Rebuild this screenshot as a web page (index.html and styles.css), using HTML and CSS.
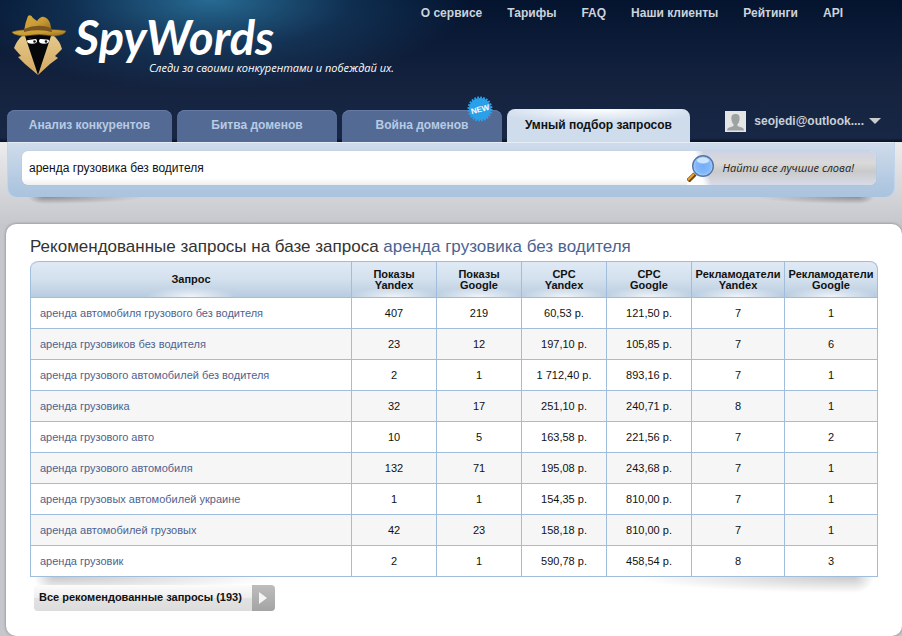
FILE: index.html
```html
<!DOCTYPE html>
<html lang="ru">
<head>
<meta charset="utf-8">
<title>SpyWords</title>
<link rel="stylesheet" href="styles.css">
</head>
<body>
<header class="header">
  <div class="topbar">
    <a class="logo" href="#">
      <svg class="spy" viewBox="0 0 54 60" aria-hidden="true">
        <defs>
          <linearGradient id="hat" x1="0" y1="0" x2="1" y2="1"><stop offset="0" stop-color="#d7ab3c"/><stop offset=".5" stop-color="#c99b35"/><stop offset="1" stop-color="#94691d"/></linearGradient>
          <linearGradient id="coat" x1="0" y1="0" x2="0" y2="1"><stop offset="0" stop-color="#e6c98b"/><stop offset="1" stop-color="#d3a861"/></linearGradient>
        </defs>
        <path d="M13 19H42L38 40L26 59L14 40Z" fill="#05070a"/>
        <path d="M11 20Q5 25 2 33L9 41L6 42L13 49L26 60L22 48L13 21Z" fill="url(#coat)"/>
        <path d="M41 20Q48 26 50 34L43 41L46 43L38 49L26 60L30 48L39 21Z" fill="url(#coat)"/>
        <path d="M0 17Q9 14 27 15Q45 14 54 16Q53 20 42 21Q27 18 12 21Q1 20 0 17Z" fill="url(#hat)" stroke="#8a641f" stroke-width=".6"/>
        <path d="M12 16Q13 8 16 1Q19-1 21 3L25 6Q29 1 32 2Q36 3 38 8L40 17Q26 13 12 16Z" fill="url(#hat)"/>
        <path d="M12 14Q26 8 39 13L40 17Q26 13 12 17Z" fill="#7c5620"/>
        <ellipse cx="20" cy="26" rx="5" ry="2.800" fill="#fff"/><ellipse cx="32" cy="26" rx="5" ry="2.800" fill="#fff"/>
        <circle cx="22.500" cy="26.500" r="1.300" fill="#111"/><circle cx="34" cy="26.500" r="1.300" fill="#111"/>
        <path d="M15 24.500L25 23M27 23L37 24" stroke="#05070a" stroke-width="1.400"/>
      </svg>
      <span class="brand"><span class="wordmark">SpyWords</span><span class="tagline">Следи за своими конкурентами и побеждай их.</span></span>
    </a>
    <nav class="nav">
      <a href="#">О сервисе</a><a href="#">Тарифы</a><a href="#">FAQ</a><a href="#">Наши клиенты</a><a href="#">Рейтинги</a><a href="#">API</a>
    </nav>
  </div>
  <div class="tabbar">
    <nav class="tabs">
      <a class="tab" href="#">Анализ конкурентов</a>
      <a class="tab" href="#">Битва доменов</a>
      <a class="tab" href="#">Война доменов
        <svg class="badge" viewBox="-13 -13 26 26" aria-hidden="true"><circle r="11" fill="#2aa0ea"/><circle r="11.500" fill="none" stroke="#2aa0ea" stroke-width="2" stroke-dasharray="1.800 1.200"/><text y="3" text-anchor="middle" transform="rotate(-14)">NEW</text></svg></a>
      <a class="tab active" href="#">Умный подбор запросов</a>
    </nav>
    <button class="user" type="button">
      <svg class="avatar" viewBox="0 0 21 21" aria-hidden="true"><rect width="21" height="21" fill="#e4e5e4"/><path d="M10.500 3C7 3 6 5 6.500 9Q7 12 8.500 13V15L3 17Q2 18 2 19.500H19Q19 18 18 17L12.500 15V13Q14 12 14.500 9C15 5 14 3 10.500 3Z" fill="#9da3a3"/></svg>
      <span>seojedi@outlook....</span><span class="caret"></span>
    </button>
  </div>
</header>
<form class="search">
  <div class="searchbox">
    <input class="query" type="text" aria-label="Запрос" value="аренда грузовика без водителя">
    <button class="find" type="button">
      <svg class="lens" viewBox="0 0 28 28" aria-hidden="true">
        <defs><radialGradient id="glass" cx=".5" cy=".5" r=".55"><stop offset="0" stop-color="#73acf8"/><stop offset=".65" stop-color="#83b8fb"/><stop offset="1" stop-color="#bfe0ff"/></radialGradient></defs>
        <path d="M1 27L8 20" stroke="#70420d" stroke-width="4.500"/><path d="M1 26L7 20" stroke="#e8a42d" stroke-width="2"/>
        <circle cx="16" cy="12" r="10.300" fill="url(#glass)" stroke="#5376a8" stroke-width="1.400"/><ellipse cx="16" cy="6.500" rx="6" ry="3" fill="#e0f1ff" opacity=".8"/>
      </svg>
      <span>Найти все лучшие слова!</span>
    </button>
  </div>
</form>
<main class="content">
  <h1 class="title">Рекомендованные запросы на базе запроса <a href="#">аренда грузовика без водителя</a></h1>
  <div class="tablewrap">
    <table class="results">
      <colgroup><col><col class="num"><col class="num"><col class="num"><col class="num"><col class="adv"><col class="adv"></colgroup>
      <thead><tr><th>Запрос</th><th>Показы<br>Yandex</th><th>Показы<br>Google</th><th>CPC<br>Yandex</th><th>CPC<br>Google</th><th>Рекламодатели<br>Yandex</th><th>Рекламодатели<br>Google</th></tr></thead>
      <tbody>
        <tr><td><a href="#">аренда автомобиля грузового без водителя</a></td><td>407</td><td>219</td><td>60,53 р.</td><td>121,50 р.</td><td>7</td><td>1</td></tr>
        <tr><td><a href="#">аренда грузовиков без водителя</a></td><td>23</td><td>12</td><td>197,10 р.</td><td>105,85 р.</td><td>7</td><td>6</td></tr>
        <tr><td><a href="#">аренда грузового автомобилей без водителя</a></td><td>2</td><td>1</td><td>1 712,40 р.</td><td>893,16 р.</td><td>7</td><td>1</td></tr>
        <tr><td><a href="#">аренда грузовика</a></td><td>32</td><td>17</td><td>251,10 р.</td><td>240,71 р.</td><td>8</td><td>1</td></tr>
        <tr><td><a href="#">аренда грузового авто</a></td><td>10</td><td>5</td><td>163,58 р.</td><td>221,56 р.</td><td>7</td><td>2</td></tr>
        <tr><td><a href="#">аренда грузового автомобиля</a></td><td>132</td><td>71</td><td>195,08 р.</td><td>243,68 р.</td><td>7</td><td>1</td></tr>
        <tr><td><a href="#">аренда грузовых автомобилей украине</a></td><td>1</td><td>1</td><td>154,35 р.</td><td>810,00 р.</td><td>7</td><td>1</td></tr>
        <tr><td><a href="#">аренда автомобилей грузовых</a></td><td>42</td><td>23</td><td>158,18 р.</td><td>810,00 р.</td><td>7</td><td>1</td></tr>
        <tr><td><a href="#">аренда грузовик</a></td><td>2</td><td>1</td><td>590,78 р.</td><td>458,54 р.</td><td>8</td><td>3</td></tr>
      </tbody>
    </table>
  </div>
  <a class="more" href="#"><span class="more-text">Все рекомендованные запросы (193)</span><span class="more-arrow"></span></a>
</main>
</body>
</html>
```
FILE: styles.css
```css
* { box-sizing: border-box; }
body {
  margin: 0;
  min-height: 100vh;
  display: flex;
  flex-direction: column;
  font: 12px/16px "Liberation Sans", Arial, sans-serif;
  color: #111;
  background: linear-gradient(#ececee 142px, #c6c7cc 225px);
}
a { color: inherit; text-decoration: none; }
button { border: 0; background: none; padding: 0; font: inherit; color: inherit; cursor: pointer; }

.header {
  background:
    radial-gradient(ellipse 260px 90px at 210px 0, rgba(48, 128, 172, .8), rgba(34, 92, 138, .35) 55%, transparent),
    linear-gradient(#04142f, #15233f 90px, #172745 138px, #0a1220);
}
.topbar { display: flex; justify-content: space-between; align-items: flex-start; min-height: 97px; padding: 0 59px 0 12px; }
.logo { display: flex; gap: 9px; padding-top: 15px; color: #fff; }
.spy { width: 54px; height: 60px; }
.brand { display: flex; flex-direction: column; }
.wordmark { font: italic 700 47px/44px Lato, sans-serif; }
.tagline { margin-left: 74px; font: italic 11px/18px "Open Sans", sans-serif; white-space: nowrap; }
.nav { display: flex; gap: 25px; padding-top: 5px; font-weight: 700; color: #ccd3da; white-space: nowrap; }

.tabbar { display: flex; justify-content: space-between; align-items: flex-end; min-height: 45px; padding: 0 21px 0 7px; }
.tabs { display: flex; align-items: flex-end; gap: 5px; }
.tab {
  position: relative;
  min-width: 160px;
  height: 32px;
  padding: 7px 15px;
  border-radius: 8px 8px 0 0;
  text-align: center;
  white-space: nowrap;
  font-weight: 700;
  color: #b9cae4;
  background: #526a94;
  box-shadow: inset 0 1px #657ba3;
}
.tab:first-child { min-width: 165px; }
.tab.active { min-width: 183px; height: 33px; padding: 8px 15px; color: #111; background: radial-gradient(ellipse 60% 14px at 50% 0, #fff, transparent), #cfdcec; box-shadow: none; }
.badge { position: absolute; top: -14px; right: 9px; width: 26px; height: 26px; }
.badge text { font: 700 8px "Liberation Sans", sans-serif; fill: #fff; }
.user { display: flex; align-items: center; gap: 8px; height: 42px; font-weight: 700; color: #c9d0d8; }
.avatar { width: 21px; height: 21px; }
.caret { border: 6px solid transparent; border-top-color: #ccc; border-bottom: 0; margin-left: -3px; }

.search {
  position: relative;
  margin: 0 7px;
  padding: 9px 18px 12px 14px;
  border: solid #c2d5eb;
  border-width: 0 1px 1px;
  border-radius: 0 0 10px 10px;
  background: linear-gradient(#cfdceb, #a9c2de);
  box-shadow: inset 0 1px #e4edf6;
}
.search::before, .search::after, .tablewrap::before, .tablewrap::after {
  content: "";
  position: absolute;
  top: 100%;
  width: 130px;
  height: 8px;
  background:
    radial-gradient(ellipse 16px 7px at 100% 0, rgba(60, 60, 64, .45), transparent) 0 0 / 16px 100% no-repeat,
    radial-gradient(ellipse 100px 7px at 0 0, rgba(60, 60, 64, .45), transparent) 16px 0 / 114px 100% no-repeat;
}
.search::before { left: 20px; }
.search::after { right: 20px; transform: scaleX(-1); }
.searchbox { display: flex; height: 34px; border-radius: 6px; background: linear-gradient(#fff 80%, #eee); box-shadow: 0 0 1px #99acbf; }
.query { flex: 1; min-width: 0; border: 0; outline: 0; padding: 0 7px; background: none; font: inherit; color: #111; }
.find { display: flex; align-items: center; gap: 8px; height: 34px; padding-right: 22px; font: italic 11px/20px "Open Sans", sans-serif; color: #222; border-radius: 0 6px 6px 0; background: linear-gradient(75deg, #fff 16px, transparent 24px), linear-gradient(#cfd2e2, #dadada 35%, #cacaca 60%, #d7dbe9); }
.lens { width: 28px; height: 28px; }

.content { flex: 1; margin: 26px 0 0 6px; padding: 12px 24px 25px; background: #fff; border-radius: 10px; box-shadow: 0 0 3px #777; }
.title { margin: 0 0 3px; font-size: 17px; line-height: 22px; font-weight: 400; color: #333; }
.title a { color: #4a6492; }
.tablewrap { position: relative; }
.tablewrap::before, .tablewrap::after {
  width: 250px;
  height: 18px;
  background:
    radial-gradient(ellipse 20px 16px at 100% 0, rgba(80, 80, 80, .3), transparent) 0 0 / 20px 100% no-repeat,
    radial-gradient(ellipse 220px 16px at 0 0, rgba(80, 80, 80, .3), transparent) 20px 0 / 230px 100% no-repeat;
}
.tablewrap::before { left: 4px; }
.tablewrap::after { right: 4px; transform: scaleX(-1); }
.results { width: 100%; table-layout: fixed; border-collapse: separate; border-spacing: 0; font-size: 11px; border-left: 1px solid #a2bcdc; border-radius: 8px 8px 0 0; }
.num { width: 85px; }
.adv { width: 93px; }
.results th { height: 37px; padding: 0; text-align: center; line-height: 11px; border: solid #a2bcdc; border-width: 1px 1px 1px 0; background: radial-gradient(ellipse 45px 10px at 50% 100%, rgba(255, 255, 255, .8), transparent), linear-gradient(#dfeaf5, #d3e0ed 50%, #b8cce0); }
.results th:first-child { border-top-left-radius: 8px; }
.results th:last-child { border-top-right-radius: 8px; }
.results td { height: 31px; padding: 0; text-align: center; border: solid #a2bcdc; border-width: 0 1px 1px 0; background: #fff; }
.results tr:nth-child(even) td { background: #f6f6f6; }
.results td:first-child { padding-left: 9px; text-align: left; color: #4f628f; }
.more { display: inline-flex; position: relative; z-index: 1; margin: 8px 0 0 4px; height: 26px; border-radius: 4px; overflow: hidden; font-size: 11px; font-weight: 700; line-height: 25px; background: linear-gradient(#fcfcfc, #eee 48%, #e2e2e2 52%, #dcdcdc); }
.more-text { padding: 0 10px 0 5px; }
.more-arrow { display: flex; align-items: center; justify-content: center; width: 23px; background: linear-gradient(#bdbdbd, #a4a4a4); }
.more-arrow::before { content: ""; border: 6px solid transparent; border-left: 8px solid #f5f5f5; border-right: 0; }
```
